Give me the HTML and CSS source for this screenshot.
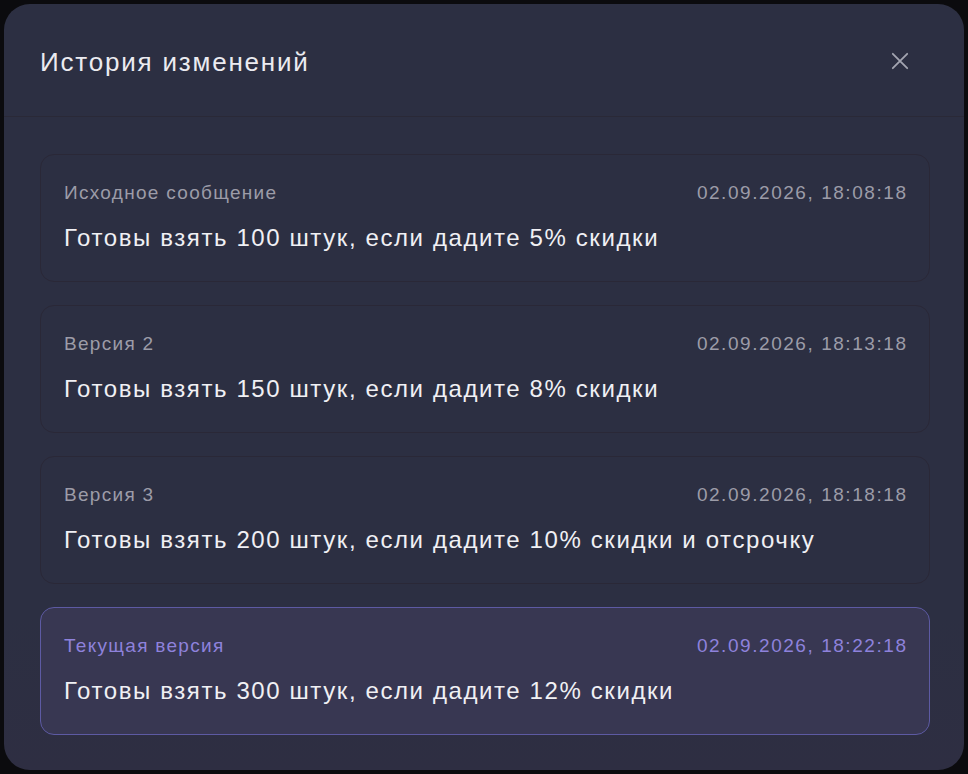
FILE: index.html
```html
<!DOCTYPE html>
<html lang="ru">
<head>
    <meta charset="UTF-8">
    <title>История изменений</title>
    <link rel="stylesheet" href="styles.css">
</head>
<body>

    <div class="modal">
        <div class="modal-header">
            <h2>История изменений</h2>
            <button class="close-btn" aria-label="Закрыть">
                <svg width="20" height="20" viewBox="0 0 20 20">
                    <path d="M2 2 L18 18 M18 2 L2 18" stroke="currentColor" stroke-width="2" stroke-linecap="round"/>
                </svg>
            </button>
        </div>

        <div class="history-list">
            <div class="version">
                <div class="version-meta">
                    <span class="version-label">Исходное сообщение</span>
                    <span class="version-date">02.09.2026, 18:08:18</span>
                </div>
                <div class="version-text">Готовы взять 100 штук, если дадите 5% скидки</div>
            </div>

            <div class="version">
                <div class="version-meta">
                    <span class="version-label">Версия 2</span>
                    <span class="version-date">02.09.2026, 18:13:18</span>
                </div>
                <div class="version-text">Готовы взять 150 штук, если дадите 8% скидки</div>
            </div>

            <div class="version">
                <div class="version-meta">
                    <span class="version-label">Версия 3</span>
                    <span class="version-date">02.09.2026, 18:18:18</span>
                </div>
                <div class="version-text">Готовы взять 200 штук, если дадите 10% скидки и отсрочку</div>
            </div>

            <!-- текущая версия -->
            <div class="version current">
                <div class="version-meta">
                    <span class="version-label">Текущая версия</span>
                    <span class="version-date">02.09.2026, 18:22:18</span>
                </div>
                <div class="version-text">Готовы взять 300 штук, если дадите 12% скидки</div>
            </div>
        </div>
    </div>

</body>
</html>
```

FILE: styles.css
```css
/* фон страницы */
body {
    margin: 0;
    padding: 4px;
    background: #0b0b0e;
    font-family: "Liberation Sans", Arial, sans-serif;
    box-sizing: border-box;
    height: 100vh;
}

/* окно */
.modal {
    height: 100%;
    box-sizing: border-box;
    background: linear-gradient(180deg, #2c2f42 0%, #2c2f42 80%, #2e2e42 100%);
    border-radius: 26px;
    display: flex;
    flex-direction: column;
}

/* шапка */
.modal-header {
    height: 113px;
    box-sizing: border-box;
    padding: 4px 36px 0 36px;
    display: flex;
    align-items: center;
    justify-content: space-between;
    border-bottom: 1px solid #2a2937;
}

.modal-header h2 {
    margin: 0;
    font-size: 26px;
    font-weight: 400;
    letter-spacing: 1.8px;
    color: #ebebf0;
}

.close-btn {
    background: none;
    border: none;
    padding: 0;
    margin-right: 18px;
    width: 20px;
    height: 20px;
    color: #a3a5b1;
    cursor: pointer;
}

.close-btn svg {
    width: 18px;
    height: 18px;
}

/* список версий */
.history-list {
    padding: 37px 34px 0 36px;
    display: flex;
    flex-direction: column;
    gap: 23px;
}

.version {
    border: 1px solid #2a2837;
    border-radius: 14px;
    padding: 25px 23px 27px 23px;
    display: flex;
    flex-direction: column;
    gap: 16px;
}

.version-meta {
    display: flex;
    justify-content: space-between;
    font-size: 19px;
    line-height: 26px;
    color: #9c9ca8;
}

.version-label {
    letter-spacing: 1.3px;
}

.version-date {
    letter-spacing: 1.55px;
    margin-right: -1.5px;
}

.version-text {
    font-size: 24px;
    line-height: 32px;
    letter-spacing: 1.6px;
    color: #f0f0f4;
}

/* текущая версия */
.version.current {
    background: #383752;
    border-color: #5d5aa3;
}

.version.current .version-meta {
    color: #8e82dc;
}
```
